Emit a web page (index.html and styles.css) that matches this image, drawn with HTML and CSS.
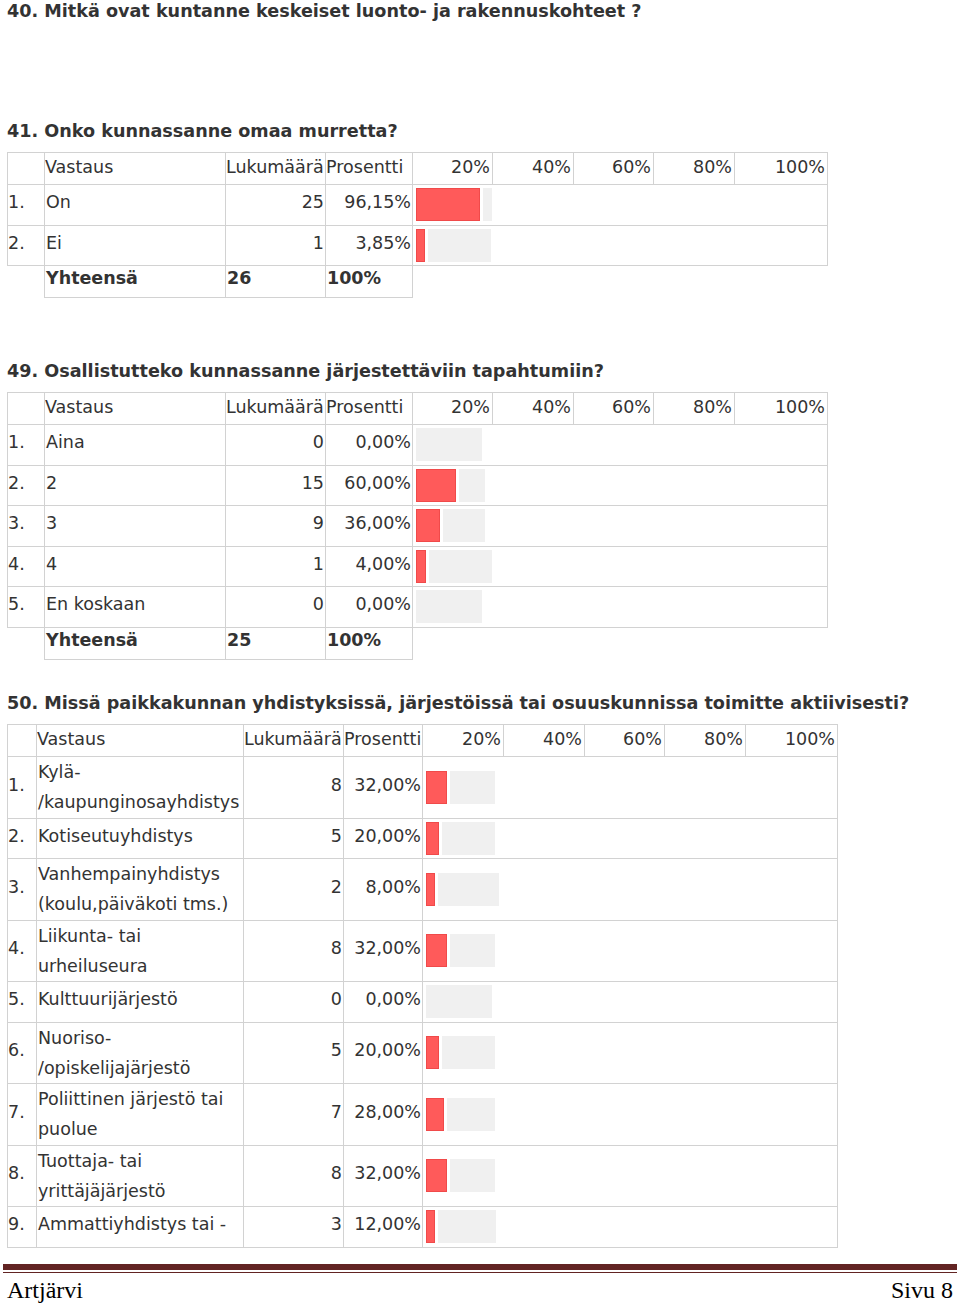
FILE: index.html
```html
<!DOCTYPE html>
<html lang="fi">
<head>
<meta charset="utf-8">
<title>Sivu 8</title>
<link rel="stylesheet" href="styles.css">
</head>
<body>
<div class="page">
  <h2 class="q q40">40. Mitkä ovat kuntanne keskeiset luonto- ja rakennuskohteet ?</h2>

  <h2 class="q q41">41. Onko kunnassanne omaa murretta?</h2>
  <table class="res t-a">
    <colgroup>
      <col class="c-num"><col class="c-ans"><col class="c-cnt"><col class="c-pct">
      <col class="c-s1"><col class="c-s2"><col class="c-s3"><col class="c-s4"><col class="c-s5">
    </colgroup>
    <tr class="head">
      <th></th><th class="l">Vastaus</th><th class="l">Lukumäärä</th><th class="l">Prosentti</th>
      <th class="sc">20%</th><th class="sc">40%</th><th class="sc">60%</th><th class="sc">80%</th><th class="sc">100%</th>
    </tr>
    <tr>
      <td class="n">1.</td><td class="a">On</td><td class="r">25</td><td class="r">96,15%</td>
      <td class="bars" colspan="5"><div class="bar"><span class="fill" style="width:64px"></span><span class="rest" style="width:9px"></span></div></td>
    </tr>
    <tr>
      <td class="n">2.</td><td class="a">Ei</td><td class="r">1</td><td class="r">3,85%</td>
      <td class="bars" colspan="5"><div class="bar"><span class="fill" style="width:9px"></span><span class="rest" style="width:63px"></span></div></td>
    </tr>
    <tr class="total">
      <td class="blank"></td><td class="a">Yhteensä</td><td>26</td><td>100%</td><td class="blank" colspan="5"></td>
    </tr>
  </table>

  <h2 class="q q49">49. Osallistutteko kunnassanne järjestettäviin tapahtumiin?</h2>
  <table class="res t-a">
    <colgroup>
      <col class="c-num"><col class="c-ans"><col class="c-cnt"><col class="c-pct">
      <col class="c-s1"><col class="c-s2"><col class="c-s3"><col class="c-s4"><col class="c-s5">
    </colgroup>
    <tr class="head">
      <th></th><th class="l">Vastaus</th><th class="l">Lukumäärä</th><th class="l">Prosentti</th>
      <th class="sc">20%</th><th class="sc">40%</th><th class="sc">60%</th><th class="sc">80%</th><th class="sc">100%</th>
    </tr>
    <tr>
      <td class="n">1.</td><td class="a">Aina</td><td class="r">0</td><td class="r">0,00%</td>
      <td class="bars" colspan="5"><div class="bar"><span class="rest first" style="width:66px"></span></div></td>
    </tr>
    <tr>
      <td class="n">2.</td><td class="a">2</td><td class="r">15</td><td class="r">60,00%</td>
      <td class="bars" colspan="5"><div class="bar"><span class="fill" style="width:40px"></span><span class="rest" style="width:26px"></span></div></td>
    </tr>
    <tr>
      <td class="n">3.</td><td class="a">3</td><td class="r">9</td><td class="r">36,00%</td>
      <td class="bars" colspan="5"><div class="bar"><span class="fill" style="width:24px"></span><span class="rest" style="width:42px"></span></div></td>
    </tr>
    <tr>
      <td class="n">4.</td><td class="a">4</td><td class="r">1</td><td class="r">4,00%</td>
      <td class="bars" colspan="5"><div class="bar"><span class="fill" style="width:10px"></span><span class="rest" style="width:63px"></span></div></td>
    </tr>
    <tr>
      <td class="n">5.</td><td class="a">En koskaan</td><td class="r">0</td><td class="r">0,00%</td>
      <td class="bars" colspan="5"><div class="bar"><span class="rest first" style="width:66px"></span></div></td>
    </tr>
    <tr class="total">
      <td class="blank"></td><td class="a">Yhteensä</td><td>25</td><td>100%</td><td class="blank" colspan="5"></td>
    </tr>
  </table>

  <h2 class="q q50">50. Missä paikkakunnan yhdistyksissä, järjestöissä tai osuuskunnissa toimitte aktiivisesti?</h2>
  <table class="res t-b">
    <colgroup>
      <col class="c-num"><col class="c-ans"><col class="c-cnt"><col class="c-pct">
      <col class="c-s1"><col class="c-s2"><col class="c-s3"><col class="c-s4"><col class="c-s5">
    </colgroup>
    <tr class="head">
      <th></th><th class="l">Vastaus</th><th class="l">Lukumäärä</th><th class="l">Prosentti</th>
      <th class="sc">20%</th><th class="sc">40%</th><th class="sc">60%</th><th class="sc">80%</th><th class="sc">100%</th>
    </tr>
    <tr>
      <td class="n">1.</td><td class="a two">Kylä-<br>/kaupunginosayhdistys</td><td class="r">8</td><td class="r">32,00%</td>
      <td class="bars" colspan="5"><div class="bar"><span class="fill" style="width:21px"></span><span class="rest" style="width:45px"></span></div></td>
    </tr>
    <tr>
      <td class="n">2.</td><td class="a">Kotiseutuyhdistys</td><td class="r">5</td><td class="r">20,00%</td>
      <td class="bars" colspan="5"><div class="bar"><span class="fill" style="width:13px"></span><span class="rest" style="width:53px"></span></div></td>
    </tr>
    <tr>
      <td class="n">3.</td><td class="a two">Vanhempainyhdistys<br>(koulu,päiväkoti tms.)</td><td class="r">2</td><td class="r">8,00%</td>
      <td class="bars" colspan="5"><div class="bar"><span class="fill" style="width:9px"></span><span class="rest" style="width:61px"></span></div></td>
    </tr>
    <tr>
      <td class="n">4.</td><td class="a two">Liikunta- tai<br>urheiluseura</td><td class="r">8</td><td class="r">32,00%</td>
      <td class="bars" colspan="5"><div class="bar"><span class="fill" style="width:21px"></span><span class="rest" style="width:45px"></span></div></td>
    </tr>
    <tr>
      <td class="n">5.</td><td class="a">Kulttuurijärjestö</td><td class="r">0</td><td class="r">0,00%</td>
      <td class="bars" colspan="5"><div class="bar"><span class="rest first" style="width:66px"></span></div></td>
    </tr>
    <tr>
      <td class="n">6.</td><td class="a two">Nuoriso-<br>/opiskelijajärjestö</td><td class="r">5</td><td class="r">20,00%</td>
      <td class="bars" colspan="5"><div class="bar"><span class="fill" style="width:13px"></span><span class="rest" style="width:53px"></span></div></td>
    </tr>
    <tr>
      <td class="n">7.</td><td class="a two">Poliittinen järjestö tai<br>puolue</td><td class="r">7</td><td class="r">28,00%</td>
      <td class="bars" colspan="5"><div class="bar"><span class="fill" style="width:18px"></span><span class="rest" style="width:48px"></span></div></td>
    </tr>
    <tr>
      <td class="n">8.</td><td class="a two">Tuottaja- tai<br>yrittäjäjärjestö</td><td class="r">8</td><td class="r">32,00%</td>
      <td class="bars" colspan="5"><div class="bar"><span class="fill" style="width:21px"></span><span class="rest" style="width:45px"></span></div></td>
    </tr>
    <tr>
      <td class="n">9.</td><td class="a">Ammattiyhdistys tai -</td><td class="r">3</td><td class="r">12,00%</td>
      <td class="bars" colspan="5"><div class="bar"><span class="fill" style="width:9px"></span><span class="rest" style="width:58px"></span></div></td>
    </tr>
  </table>
</div>

<footer class="footer">
  <div class="rule"></div>
  <div class="foot-text">
    <span>Artjärvi</span>
    <span>Sivu 8</span>
  </div>
</footer>
</body>
</html>
```

FILE: styles.css
```css
html, body {
  margin: 0;
  padding: 0;
  background: #ffffff;
}

body {
  font-family: "DejaVu Sans", Verdana, sans-serif;
  color: #333333;
  width: 960px;
  height: 1306px;
  overflow: hidden;
}

.page {
  padding: 0 0 0 7px;
}

.q {
  margin: 0;
  font-size: 17.6px;
  font-weight: bold;
  line-height: 22px;
  color: #333333;
  white-space: nowrap;
}

.q40 { margin-top: 0; }
.q41 { margin-top: 98px; margin-bottom: 10px; }
.q49 { margin-top: 62px; margin-bottom: 10px; }
.q50 { margin-top: 32px; margin-bottom: 10.5px; }

.res {
  border-collapse: collapse;
  table-layout: fixed;
  font-size: 17.5px;
  line-height: 30px;
}

.t-a { width: 820px; }
.t-b { width: 830px; }

.t-a .c-num { width: 37px; }
.t-a .c-ans { width: 181px; }
.t-a .c-cnt { width: 100px; }
.t-a .c-pct { width: 87px; }
.t-a .c-s1 { width: 80px; }
.t-a .c-s2 { width: 81px; }
.t-a .c-s3 { width: 80px; }
.t-a .c-s4 { width: 81px; }
.t-a .c-s5 { width: 93px; }

.t-b .c-num { width: 29px; }
.t-b .c-ans { width: 207px; }
.t-b .c-cnt { width: 100px; }
.t-b .c-pct { width: 79px; }
.t-b .c-s1 { width: 81px; }
.t-b .c-s2 { width: 81px; }
.t-b .c-s3 { width: 80px; }
.t-b .c-s4 { width: 81px; }
.t-b .c-s5 { width: 92px; }

.res th,
.res td {
  border: 1px solid #d2d2d2;
  padding: 0 1px 5px;
  vertical-align: middle;
  white-space: nowrap;
  overflow: hidden;
}

.res th {
  font-weight: normal;
  line-height: 28px;
  padding: 0 1px 3px;
}

.res th.l { text-align: left; padding-left: 0; }
.res th.sc { text-align: right; padding-right: 2px; }

.res td.n { padding-left: 0; }
.res td.a { padding-left: 1px; }
.res td.a.two { padding-bottom: 0.5px; }
.res td.r { text-align: right; }

.res td.bars {
  padding: 0 0 0 3px;
}

.bar {
  display: flex;
  height: 33px;
  margin: 3px 0 3.5px;
}

.fill {
  display: block;
  height: 33px;
  background: #ff5a5a;
  box-shadow: inset 0 0 0 1px #f04a4a;
}

.rest {
  display: block;
  height: 33px;
  margin-left: 3px;
  background: #f0f0f0;
}

.rest.first { margin-left: 0; }

.res tr.total td {
  font-weight: bold;
  text-align: left;
  line-height: 24px;
  padding-top: 0;
  padding-bottom: 7px;
}

.res tr.total td.blank {
  border-left: none;
  border-right: none;
  border-bottom: none;
}

.footer {
  margin: 0 3px;
  position: absolute;
  top: 1264px;
  left: 0;
  right: 0;
}

.rule {
  height: 2px;
  border-top: 6px solid #622423;
  border-bottom: 1px solid #622423;
}

.foot-text {
  display: flex;
  justify-content: space-between;
  padding: 3px 4px 0 4px;
  font-family: "Liberation Serif", "Times New Roman", serif;
  font-size: 24px;
  line-height: 28px;
  color: #000000;
}
```
